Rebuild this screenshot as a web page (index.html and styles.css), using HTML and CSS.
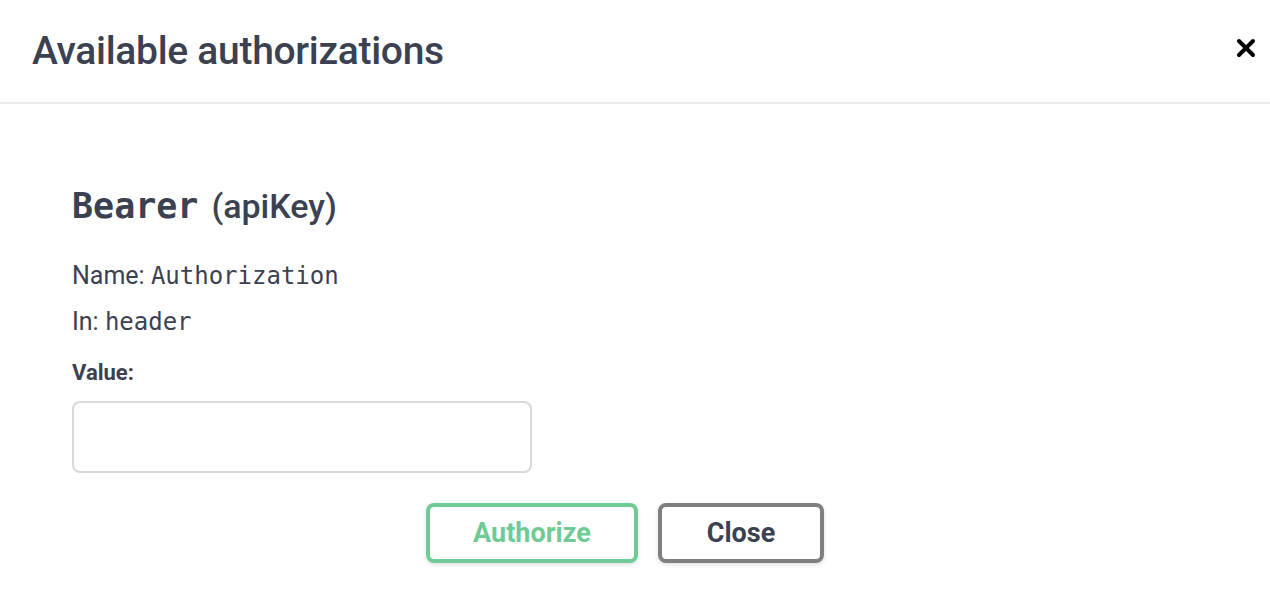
FILE: index.html
```html
<!DOCTYPE html>
<html>
<head>
<meta charset="utf-8">
<link rel="stylesheet" href="styles.css">
</head>
<body>
<div class="modal">
  <div class="modal-header">
    <h3 class="modal-title">Available authorizations</h3>
    <button class="close-x" aria-label="Close">
      <svg width="20" height="20" viewBox="0 0 20 20"><path d="M3 3 L17 17 M17 3 L3 17" stroke="#000" stroke-width="4" stroke-linecap="round"/></svg>
    </button>
  </div>
  <div class="modal-content">
    <div class="auth-container">
      <h4 class="auth-title"><code class="mono">Bearer</code> <span class="auth-type">(apiKey)</span></h4>
      <p class="auth-row">Name: <code class="mono">Authorization</code></p>
      <p class="auth-row">In: <code class="mono">header</code></p>
      <label class="value-label">Value:</label>
      <input class="value-input" type="text">
      <div class="btn-wrapper">
        <button class="btn btn-authorize">Authorize</button>
        <button class="btn btn-close">Close</button>
      </div>
    </div>
  </div>
</div>
</body>
</html>
```

FILE: styles.css
```css
html, body {
  margin: 0;
  padding: 0;
  background: #fff;
}
body {
  font-family: Roboto, "Liberation Sans", sans-serif;
  color: #3b4151;
}
.modal-header {
  display: flex;
  align-items: center;
  justify-content: space-between;
  height: 102px;
  padding: 0 14px 0 32px;
  border-bottom: 2px solid #ebebeb;
  box-sizing: content-box;
}
.modal-title {
  margin: 0;
  font-size: 39px;
  font-weight: 500;
  letter-spacing: -0.3px;
  color: #3b4151;
}
.close-x {
  border: none;
  background: none;
  padding: 0;
  width: 20px;
  height: 20px;
  display: flex;
  margin-bottom: 6px;
}
.modal-content {
  padding: 40px 32px;
}
.auth-container {
  padding: 40px 40px 0 40px;
}
.auth-title {
  margin: 0 0 25px;
  font-size: 36px;
  font-weight: 500;
  line-height: 44px;
}
.mono {
  font-family: "DejaVu Sans Mono", "Liberation Mono", monospace;
}
.auth-title .mono {
  font-size: 35px;
  font-weight: 600;
}
.auth-type {
  font-size: 34px;
  margin-left: 4px;
}
.auth-row {
  margin: 0;
  font-size: 25px;
  line-height: 45px;
}
.auth-row .mono {
  font-size: 24px;
}
.value-label {
  display: block;
  margin-top: 12px;
  font-size: 22px;
  font-weight: 700;
  line-height: 32px;
}
.value-input {
  display: block;
  box-sizing: border-box;
  width: 460px;
  height: 72px;
  margin-top: 12px;
  border: 2px solid #d9d9d9;
  border-radius: 8px;
  background: #fff;
  outline: none;
}
.btn-wrapper {
  display: flex;
  justify-content: center;
  padding-top: 30px;
}
.btn {
  box-sizing: border-box;
  height: 60px;
  border-radius: 8px;
  background: #fff;
  border: 4px solid;
  font-family: Roboto, "Liberation Sans", sans-serif;
  font-size: 27px;
  font-weight: 700;
  box-shadow: 0 2px 4px rgba(0,0,0,0.12);
}
.btn-authorize {
  width: 212px;
  margin-right: 20px;
  border-color: #6fcb93;
  color: #6fcb93;
}
.btn-close {
  width: 166px;
  margin-right: 20px;
  border-color: #7f7f7f;
  color: #3b4151;
}
```
